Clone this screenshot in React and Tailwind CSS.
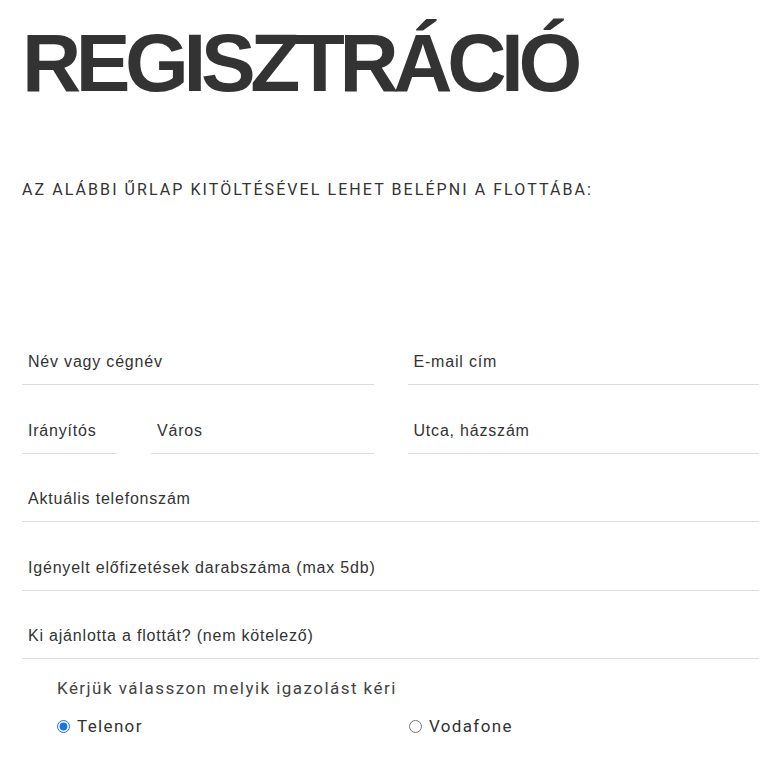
import React, { useState } from "react";

function Field({ label, className = "" }) {
  return (
    <div className={"h-[46px] flex items-center border-b border-[#dddddd] " + className}>
      <span className="pl-[6px] pt-[1px] text-[16px] tracking-[0.05em] text-[#333333] whitespace-nowrap overflow-hidden">
        {label}
      </span>
    </div>
  );
}

export default function App() {
  const [provider, setProvider] = useState("telenor");

  return (
    <div className="w-full min-h-screen bg-white pl-[22px] pr-[2px] font-['Liberation_Sans',Arial,sans-serif]">
      <h1 className="pt-[22px] text-[82px] leading-none font-bold tracking-[-5.4px] text-[#333333]">
        REGISZTRÁCIÓ
      </h1>

      <p className="mt-[74px] text-[16px] tracking-[2.07px] text-[#333333] font-['Roboto',sans-serif]">
        AZ ALÁBBI ŰRLAP KITÖLTÉSÉVEL LEHET BELÉPNI A FLOTTÁBA:
      </p>

      {/* urlap */}
      <div className="mt-[137px] flex flex-col gap-[22px]">
        <div className="grid grid-cols-2 gap-[34px]">
          <Field label="Név vagy cégnév" />
          <Field label="E-mail cím" />
        </div>
        <div className="mt-[1px] grid grid-cols-2 gap-[34px]">
          <div className="flex gap-[34px]">
            <Field label="Irányítós" className="w-[95px]" />
            <Field label="Város" className="flex-1" />
          </div>
          <Field label="Utca, házszám" />
        </div>
        <Field label="Aktuális telefonszám" />
        <Field label="Igényelt előfizetések darabszáma (max 5db)" className="mt-[1px]" />
        <Field label="Ki ajánlotta a flottát? (nem kötelező)" />
      </div>

      <div className="pl-[35px] pt-[17px] font-['Roboto',sans-serif] text-[#444444]">
        <p className="text-[17px] tracking-[1.45px]">Kérjük válasszon melyik igazolást kéri</p>
        <div className="mt-[12px] grid grid-cols-2 text-[17px] tracking-[1.35px] text-[#333333]">
          <label className="flex items-center gap-[7px]">
            <input
              type="radio"
              name="provider"
              checked={provider === "telenor"}
              onChange={() => setProvider("telenor")}
              className="m-0 w-[13px] h-[13px] accent-[#1a73e8]"
            />
            Telenor
          </label>
          <label className="flex items-center gap-[7px] ml-[1px]">
            <input
              type="radio"
              name="provider"
              checked={provider === "vodafone"}
              onChange={() => setProvider("vodafone")}
              className="m-0 w-[13px] h-[13px]"
            />
            Vodafone
          </label>
        </div>
      </div>
    </div>
  );
}
